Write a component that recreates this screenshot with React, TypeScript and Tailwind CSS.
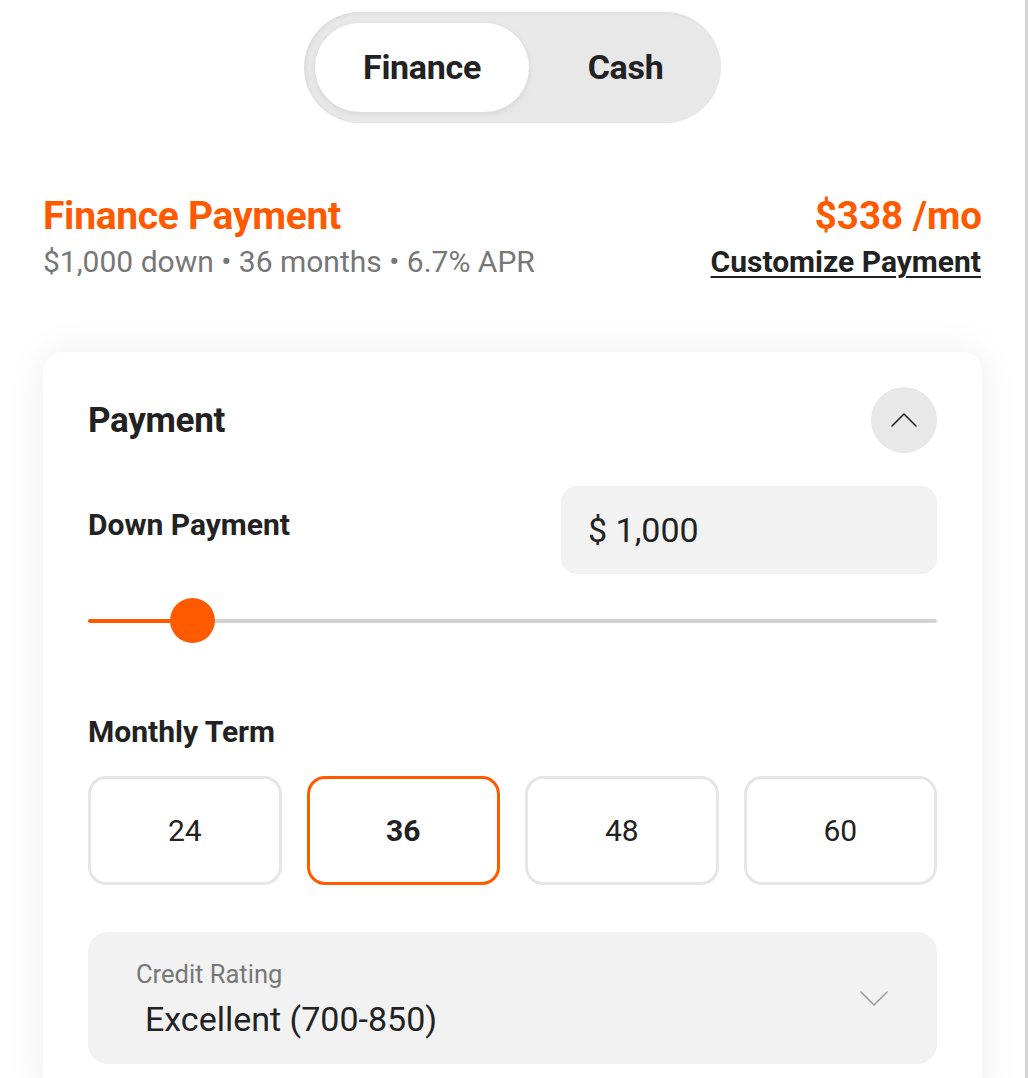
import { useState } from "react";

const terms = [24, 36, 48, 60];

function ChevronUp() {
  return (
    <svg width="28" height="16" viewBox="0 0 28 16" fill="none">
      <path d="M2 14L14 2l12 12" stroke="#222" strokeWidth={1.6} strokeLinecap="round" strokeLinejoin="round" />
    </svg>
  );
}

function ChevronDown() {
  return (
    <svg width="30" height="16" viewBox="0 0 30 16" fill="none">
      <path d="M2 2l13 13L28 2" stroke="#999" strokeWidth={1.5} strokeLinecap="round" strokeLinejoin="round" />
    </svg>
  );
}

export default function App() {
  const [mode, setMode] = useState("finance");
  const [term, setTerm] = useState(36);

  return (
    <div className="w-[1028px] min-h-[1078px] bg-white border-r-[3px] border-[#d2d2d2] font-['Roboto',sans-serif] text-[#222]">
      <div className="px-[43px] pt-[12px]">
        {/* toggle */}
        <div className="flex justify-center">
          <div className="flex items-center h-[111px] w-[417px] rounded-full bg-[#e8e8e8] px-[11px] shadow-[inset_2px_1px_4px_rgba(0,0,0,0.06)]">
            <button
              onClick={() => setMode("finance")}
              className={`h-[89px] w-[214px] rounded-full text-[34px] font-bold tracking-[-0.3px] ${mode === "finance" ? "bg-white shadow-[0_2px_6px_rgba(0,0,0,0.08)]" : ""}`}
            >
              Finance
            </button>
            <button
              onClick={() => setMode("cash")}
              className={`h-[89px] flex-1 pl-[12px] rounded-full text-[34px] font-bold tracking-[-0.3px] ${mode === "cash" ? "bg-white" : ""}`}
            >
              Cash
            </button>
          </div>
        </div>

        {/* summary */}
        <div className="flex justify-between items-start mt-[70px]">
          <div>
            <h2 className="text-[39px] leading-[46px] font-bold text-[#ff5a00] tracking-[-0.3px]">Finance Payment</h2>
            <p className="text-[30px] leading-[36px] text-[#777] mt-[5px]">$1,000 down • 36 months • 6.7% APR</p>
          </div>
          <div className="flex flex-col items-end">
            <div className="text-[38.5px] leading-[46px] font-bold text-[#ff5a00]">$338 /mo</div>
            <a href="#" className="text-[30px] leading-[36px] font-bold underline underline-offset-[4px] decoration-2 mt-[5px] mr-[1px]">
              Customize Payment
            </a>
          </div>
        </div>

        {/* card */}
        <div className="mt-[72px] rounded-[20px] bg-white shadow-[0_0_40px_rgba(0,0,0,0.07)] px-[45px] pt-[35px] pb-[40px]">
          <div className="flex items-center justify-between">
            <h3 className="text-[35px] font-bold tracking-[-0.3px] pt-[2px]">Payment</h3>
            <button className="w-[66px] h-[66px] rounded-full bg-[#e8e8e8] flex items-center justify-center">
              <ChevronUp />
            </button>
          </div>

          <div className="flex justify-between items-start mt-[33px]">
            <div className="text-[30px] font-bold pt-[16px]">Down Payment</div>
            <div className="w-[376px] h-[88px] rounded-[16px] bg-[#f2f2f2] flex items-center px-[27px] text-[34px]">
              $ 1,000
            </div>
          </div>

          {/* slider */}
          <div className="relative mt-[24px] h-[45px] flex items-center">
            <div className="w-full h-[4px] rounded-full bg-[#d2d2d2]" />
            <div className="absolute left-0 h-[4px] w-[104px] bg-[#ff5a00] rounded-l-full" />
            <div className="absolute left-[82px] w-[45px] h-[45px] rounded-full bg-[#ff5a00]" />
          </div>

          <div className="mt-[71px] text-[30px] leading-[36px] font-bold">Monthly Term</div>
          <div className="grid grid-cols-4 gap-[25px] mt-[26px]">
            {terms.map((t) => (
              <button
                key={t}
                onClick={() => setTerm(t)}
                className={`h-[109px] rounded-[18px] border-[3px] text-[30px] ${term === t ? "border-[#ff5a00] font-bold" : "border-[#e6e6e6]"}`}
              >
                {t}
              </button>
            ))}
          </div>

          <div className="mt-[47px] h-[132px] rounded-[20px] bg-[#f2f2f2] flex items-center justify-between pl-[48px] pr-[48px]">
            <div className="self-start pt-[27px]">
              <div className="text-[25.5px] text-[#777] leading-[30px]">Credit Rating</div>
              <div className="text-[34px] leading-[42px] mt-[9px] ml-[9px]">Excellent (700-850)</div>
            </div>
            <ChevronDown />
          </div>
        </div>
      </div>
    </div>
  );
}
